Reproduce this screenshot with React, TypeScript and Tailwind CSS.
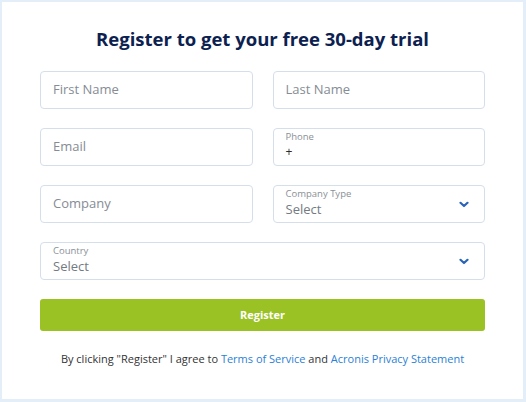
function Chevron() {
  return (
    <svg width="10" height="7" viewBox="0 0 10 7" className="shrink-0">
      <path d="M1.5 1.8 L5 5 L8.5 1.8" fill="none" stroke="#2a64b8" strokeWidth="2.2" strokeLinecap="round" strokeLinejoin="round" />
    </svg>
  );
}

function TextField({ placeholder }: { placeholder: string }) {
  return (
    <div className="flex h-[38px] items-center rounded-[4px] border border-[#d5dfeb] bg-white px-3">
      <span className="text-[13px] text-[#858c94]">{placeholder}</span>
    </div>
  );
}

function LabelField({ label, value, select, dark }: { label: string; value: string; select?: boolean; dark?: boolean }) {
  return (
    <div className="flex h-[38px] items-center rounded-[4px] border border-[#d5dfeb] bg-white pl-3 pr-[15px]">
      <div className="flex flex-1 flex-col self-start pt-[1px]">
        <span className="text-[9.5px] leading-[13px] text-[#8a9097]">{label}</span>
        <span className={`leading-[18px] ${dark ? "text-[12px] text-[#2b2b2b]" : "text-[13px] text-[#737a82]"}`}>{value}</span>
      </div>
      {select && <Chevron />}
    </div>
  );
}

export default function App() {
  return (
    <div className="h-[402px] w-[526px] bg-[#e4eef8] pb-[3px] pl-[2px] pr-[3px] pt-[2px] font-['Open_Sans',sans-serif]">
      <div className="flex h-full flex-col bg-white px-[38px]">
        <h1 className="mt-[24px] text-center text-[18.5px] font-bold leading-[26px] text-[#0c2150]">
          Register to get your free 30-day trial
        </h1>
        <div className="mt-[19px] grid grid-cols-2 gap-x-[20px] gap-y-[19px]">
          <TextField placeholder="First Name" />
          <TextField placeholder="Last Name" />
          <TextField placeholder="Email" />
          <LabelField label="Phone" value="+" dark />
          <TextField placeholder="Company" />
          <LabelField label="Company Type" value="Select" select />
          <div className="col-span-2">
            <LabelField label="Country" value="Select" select />
          </div>
        </div>
        <button className="mt-[19px] h-[32px] w-full rounded-[3px] bg-[#9bc225] text-[11px] font-bold text-white">
          Register
        </button>
        <p className="mt-[20px] text-center text-[11px] text-[#333]">
          By clicking "Register" I agree to <span className="text-[#2b7fd6]">Terms of Service</span> and{" "}
          <span className="text-[#2b7fd6]">Acronis Privacy Statement</span>
        </p>
      </div>
    </div>
  );
}
